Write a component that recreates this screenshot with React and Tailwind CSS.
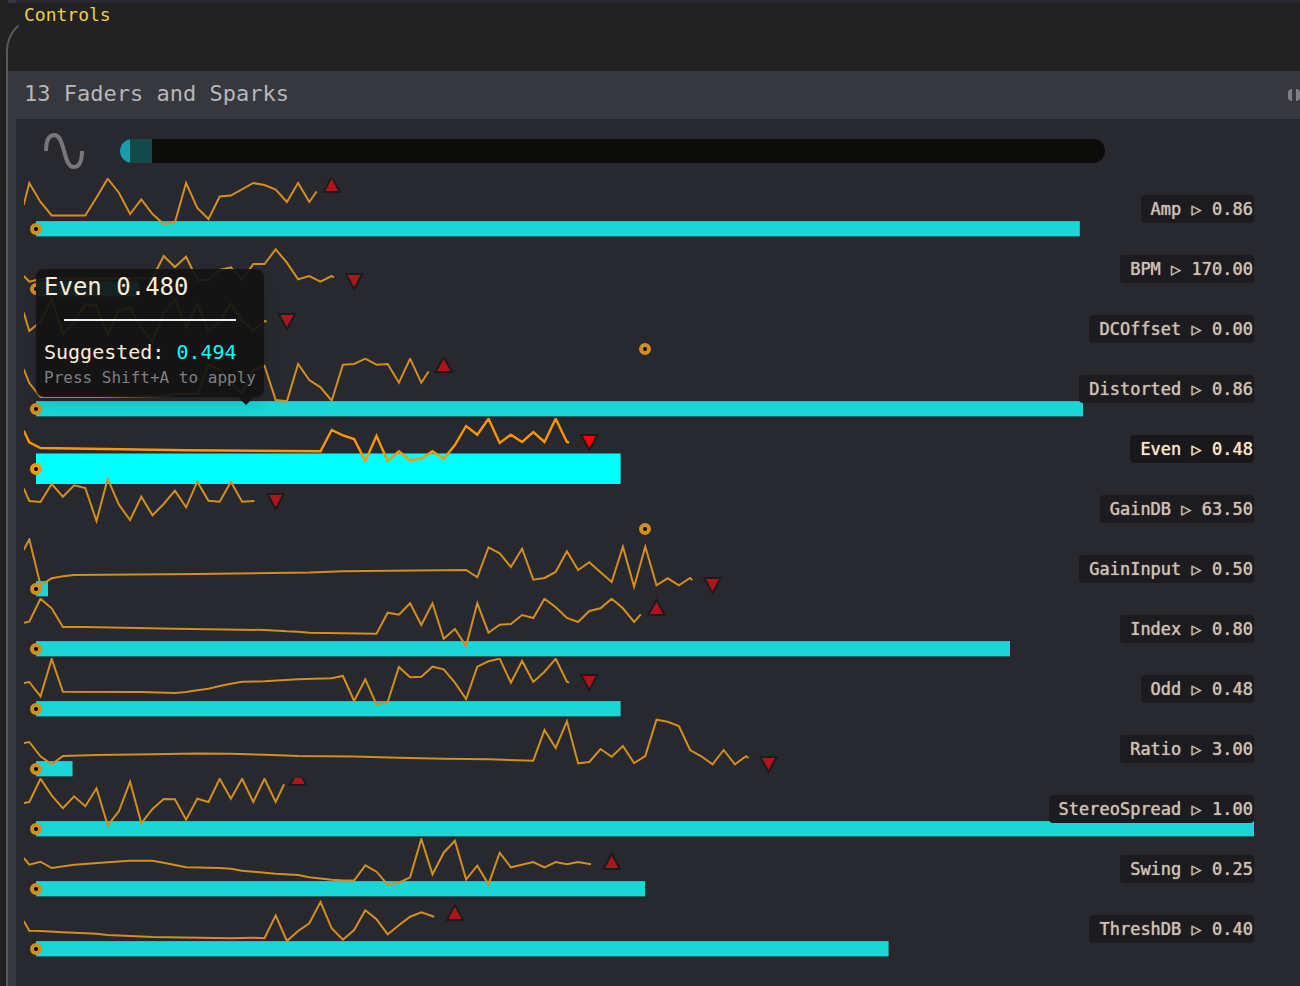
const STEP = 11.2;
const OFFSET = 5.3;

// spark: [step, y] pairs, marker: [step, top, direction], fill and dot in percent
const faders = [
  {
    name: 'Amp', value: '0.86', fill: 85.7, dot: 0, marker: [27, 1, 'up'],
    spark: [[-0.5, 27], [0, 5], [1, 24], [2, 37.5], [5, 37.5], [6, 19.5], [7, 0.7], [8, 14.7], [9, 36], [10, 21.5], [11, 36], [12, 46], [13, 44.5], [14, 5], [15, 30], [16, 41], [17, 18.5], [18, 17.5], [20, 5], [21, 7], [22, 11.7], [23, 24], [24, 5], [25, 24], [25.65, 13.5]],
  },
  {
    name: 'BPM', value: '170.00', fill: 8.5, dot: 0, marker: [29, 37, 'down'],
    spark: [[-0.5, 38], [0, 43.7], [1, 41], [11, 40], [12, 18], [13, 29], [14, 18.7], [15, 42], [16, 42], [17, 32], [18, 29.3], [19, 42], [20, 26], [21, 26], [22, 11.3], [23, 24.7], [24, 41.3], [25, 38], [26, 43.7], [27, 38], [27.2, 39.5]],
  },
  {
    name: 'DCOffset', value: '0.00', fill: 0, dot: 50, marker: [23, 17, 'down'],
    spark: [[-0.5, 14.5], [0, 33], [1, 23.7], [2, 1], [3, 36], [4, 24], [5, 6], [6, 8], [7, 37], [8, 12], [9, 9.5], [10, 30], [11, 43.7], [12, 15.5], [13, 1.5], [14, 29.5], [15, 5.5], [16, 32.7], [17, 23.7], [18, 5.5], [19, 23], [20, 32.7], [21, 23.3], [21.2, 23.3]],
  },
  {
    name: 'Distorted', value: '0.86', fill: 86, dot: 0, marker: [37, 1, 'up'],
    spark: [[-0.5, 11], [0, 25], [1, 39], [6, 39], [12, 38], [13, 36], [15, 36], [16, 7], [17, 11.5], [18, 26], [19, 35.5], [20, 12], [21, 7.7], [22, 42], [23, 43.3], [24, 6], [25, 22], [26, 29.3], [27, 42.7], [28, 6.7], [29, 6], [30, 0.7], [31, 6.7], [32, 6], [33, 24.7], [34, 0.7], [35, 24.7], [35.65, 13.5]],
  },
  {
    name: 'Even', value: '0.48', fill: 48, dot: 0, marker: [50, 18, 'down'], active: true,
    spark: [[-0.5, 12.7], [0, 24.3], [1, 30], [14, 32.3], [26, 33.3], [27, 12], [28, 17.3], [29, 21], [30, 43], [31, 18], [32, 43], [33, 33.3], [34, 42.3], [35, 40.7], [36, 33.3], [37, 40.7], [38, 27], [39, 8], [40, 16.7], [41, 0.7], [42, 25], [43, 16.7], [44, 24], [45, 14], [46, 24], [47, 0.7], [48, 24], [48.2, 24.5]],
  },
  {
    name: 'GainDB', value: '63.50', fill: 0, dot: 50, marker: [22, 17, 'down'],
    spark: [[-0.5, 10.3], [0, 23], [1, 24], [2, 6], [3, 18.7], [4, 7.3], [5, 10], [6, 43], [7, 0.7], [8, 26.7], [9, 42], [10, 18.7], [11, 37.3], [12, 26], [13, 12.7], [14, 29.3], [15, 3.7], [16, 22.7], [17, 23.7], [18, 3.7], [19, 23.7], [20.1, 23]],
  },
  {
    name: 'GainInput', value: '0.50', fill: 1, dot: 0, marker: [61, 41, 'down'],
    spark: [[-0.5, 12], [0, 1.3], [1, 47], [2, 40.3], [3, 38.3], [4, 37], [15, 36], [25, 34.5], [28, 33.3], [39, 32], [40, 39.3], [41, 9.3], [42, 15.3], [43, 29], [44, 10.7], [45, 41.7], [46, 40], [47, 34], [48, 13.3], [49, 32], [50, 24.3], [51, 34.3], [52, 44], [53, 8.7], [54, 48.7], [55, 8.7], [56, 47.3], [57, 40.3], [58, 47.3], [59, 40], [59.2, 42]],
  },
  {
    name: 'Index', value: '0.80', fill: 80, dot: 0, marker: [56, 4, 'up'],
    spark: [[-0.5, 24.7], [0, 23.7], [1, 0.7], [2, 10.3], [3, 29], [5, 29], [13, 30.7], [21, 32], [23, 33.3], [24, 33.7], [25, 34.7], [31, 35.7], [32, 14.7], [33, 16.7], [34, 5.3], [35, 27], [36, 5.3], [37, 40.7], [38, 31], [39, 48], [40, 5.3], [41, 34.7], [42, 26.7], [43, 26], [44, 17], [45, 20], [46, 0.7], [47, 9.3], [48, 20], [49, 24], [50, 13], [51, 10.3], [52, 0.7], [53, 10.3], [54, 24], [54.6, 16.3]],
  },
  {
    name: 'Odd', value: '0.48', fill: 48, dot: 0, marker: [50, 18, 'down'],
    spark: [[-0.5, 25], [0, 24], [1, 38.3], [2, 1], [3, 33.7], [10, 34], [13, 35], [14, 34], [15, 32.3], [16, 30.7], [17, 28], [18, 25.7], [19, 23.7], [21, 23.3], [24, 21.3], [27, 20.3], [28, 18], [29, 43], [30, 21.3], [31, 46.7], [32, 44], [33, 9], [34, 19.3], [35, 18.7], [36, 8.7], [37, 11.3], [38, 24.7], [39, 41], [40, 8.7], [41, 3.3], [42, 0.7], [43, 24.7], [44, 3], [45, 24], [46, 13.7], [47, 0.7], [48, 23.7], [48.2, 24.7]],
  },
  {
    name: 'Ratio', value: '3.00', fill: 3, dot: 0, marker: [66, 40, 'down'],
    spark: [[-0.5, 25], [0, 24], [1, 38.3], [2, 46.3], [3, 38], [6, 37], [11, 36.3], [15, 35.5], [18, 35.7], [21, 36.7], [24, 38], [29, 38.5], [33, 39.7], [37, 40.7], [41, 41.3], [45, 42.7], [46, 12], [47, 30], [48, 3.3], [49, 45.3], [50, 44], [51, 31], [52, 38.7], [53, 28], [54, 45], [55, 38], [56, 1.7], [57, 3.7], [58, 8], [59, 32], [60, 38.3], [61, 46.3], [62, 32], [63, 46.3], [64, 38.3], [64.2, 40]],
  },
  {
    name: 'StereoSpread', value: '1.00', fill: 100, dot: 0, marker: [24, -6, 'up'],
    spark: [[-0.5, 25], [0, 24], [1, 0.7], [2, 17.3], [3, 30.3], [4, 18.3], [5, 28.3], [6, 10.3], [7, 47.3], [8, 33.3], [9, 3.7], [10, 45.3], [11, 31], [12, 21], [13, 21.3], [14, 41.7], [15, 20.7], [16, 24], [17, 0.7], [18, 20.7], [19, 0.7], [20, 24], [21, 0.7], [22, 24], [22.75, 6.3]],
  },
  {
    name: 'Swing', value: '0.25', fill: 50, dot: 0, marker: [52, 18, 'up'],
    spark: [[-0.5, 20], [0, 26.7], [1, 23.7], [2, 30], [4, 26.7], [7, 24.3], [9, 22.7], [11, 22.7], [12, 24.7], [14, 29.3], [17, 30], [18, 30.7], [19, 32.7], [22, 35.7], [24, 37], [25, 39.3], [27, 41.7], [28, 42.5], [29, 42.5], [30, 27.3], [31, 33.7], [32, 46.7], [33, 44.7], [34, 39.3], [35, 1], [36, 36.3], [37, 14.7], [38, 2.7], [39, 41.3], [40, 27.7], [41, 46.3], [42, 14.7], [43, 29.3], [45, 24], [46, 29.3], [47, 24], [48, 26.3], [49, 24], [50.15, 26.3]],
  },
  {
    name: 'ThreshDB', value: '0.40', fill: 70, dot: 0, marker: [38, 9, 'up'],
    spark: [[-0.5, 23], [0, 32.7], [1, 33], [3, 34.3], [6, 35.7], [7, 37], [11, 39], [18, 40.3], [20, 39.7], [21, 40.3], [22, 17.3], [23, 43], [24, 33], [25, 25.3], [26, 4], [27, 30.3], [28, 41.7], [29, 32], [30, 12.3], [31, 21.3], [32, 36.3], [33, 27.3], [34, 18.7], [35, 14.3], [36.15, 18.7]],
  },
];

function Spark({ points, marker, active }) {
  const [step, top, direction] = marker;
  const x = OFFSET + step * STEP;
  const bottom = top + 12;
  const triangle =
    direction === 'up'
      ? `${x},${top} ${x + 6.5},${bottom} ${x - 6.5},${bottom}`
      : `${x},${bottom} ${x + 6.5},${top} ${x - 6.5},${top}`;

  return (
    <svg className="[grid-area:1/1] w-full h-[60px] pointer-events-none" aria-hidden="true">
      <polyline
        points={points.map(([i, y]) => `${OFFSET + i * STEP},${y}`).join(' ')}
        fill="none"
        stroke={active ? '#ff9500' : '#d38e1f'}
        strokeWidth={active ? 2.4 : 2}
      />
      <polygon
        points={triangle}
        fill={active ? '#ff0000' : '#b01419'}
        stroke="#1b1b1e"
        strokeWidth="4"
        paintOrder="stroke"
      />
    </svg>
  );
}

function Tooltip() {
  return (
    <div
      role="tooltip"
      className="absolute z-10 left-3 bottom-full mb-[21px] w-max px-2 pb-[10px] rounded-lg bg-[#121212]/92 shadow-lg"
    >
      <p className="text-2xl leading-9 text-[#fbebd7]">Even 0.480</p>
      <hr className="mx-5 my-[14px] border-t-2 border-[#eeeeee]" />
      <p className="text-xl leading-[34px] text-[#fbebd7]">
        Suggested: <span className="text-[#00ffff]">0.494</span>
      </p>
      <p className="text-base leading-[18px] text-[#7f7f7f]">Press Shift+A to apply</p>
      <svg className="absolute top-full right-[10px] w-4 h-2" viewBox="0 0 16 8" aria-hidden="true">
        <polygon points="0,0 16,0 8,8" fill="#161616" />
      </svg>
    </div>
  );
}

function Fader({ name, value, fill, dot, marker, spark, active }) {
  return (
    <div className="relative grid grid-cols-1 h-[60px]">
      <input
        id={name}
        type="range"
        min="0"
        max="100"
        step="0.1"
        defaultValue={fill}
        className={`[grid-area:1/1] appearance-none ml-3 bg-no-repeat outline-none [&::-webkit-slider-thumb]:appearance-none [&::-webkit-slider-thumb]:opacity-0 ${
          active
            ? 'mt-[35px] h-[31px] bg-[linear-gradient(#159a9c_1px,#00ffff_1px)]'
            : 'mt-[43px] h-4 bg-[linear-gradient(#22bfc0_1px,#1ad6d6_1px,#1ad6d6_15px,#256769_15px)]'
        }`}
        style={{ backgroundSize: `${fill}% 100%` }}
      />
      <Spark points={spark} marker={marker} active={active} />
      <div className="[grid-area:1/1] relative ml-3 mt-[45px] h-3 pointer-events-none">
        <span
          className={`absolute -translate-x-1/2 size-3 rounded-full border-4 bg-black ${
            active ? 'border-[#ff9800]' : 'border-[#d38e1f]'
          }`}
          style={{ left: `${dot}%` }}
        ></span>
      </div>
      <label
        htmlFor={name}
        className={`[grid-area:1/1] relative justify-self-end mt-[17px] h-7 pl-[10px] pr-px rounded text-[17px] leading-7 whitespace-nowrap [text-shadow:0_0_1px_currentColor] ${
          active ? 'bg-[#18181a] text-[#ffe4c4]' : 'bg-[#1c1c20] text-[#cdc0b1]'
        }`}
      >
        {name} ▷ {value}
      </label>
      {active && <Tooltip />}
    </div>
  );
}

export default function App() {
  return (
    <div className="min-h-screen flex flex-col overflow-hidden bg-[#222222] font-['DejaVu_Sans_Mono',monospace]">
      <div className="h-[3px] ml-2 border-l-8 border-[#37383d] bg-[#28292e]"></div>

      <div className="flex h-[68px]">
        <svg className="w-6 h-[68px]" viewBox="0 0 24 68" fill="none" aria-hidden="true">
          <path d="M18.5 22.5C11 29 7 37 7 48V68" stroke="#5a5a5a" strokeWidth="2" />
        </svg>
        <h1 className="text-lg leading-6 text-[#f0cf45]">Controls</h1>
      </div>

      <section className="flex-1 flex flex-col ml-[6px] border-l-2 border-[#5a5a5a] bg-[#37383d]">
        <header className="flex items-center justify-between h-12 pl-4">
          <h2 className="pb-[3px] text-[22px] leading-8 text-[#b6b6bb]">13 Faders and Sparks</h2>
          <button type="button" aria-label="Resize panel" className="flex gap-1">
            <span className="w-1 h-3 rounded-l-full bg-[#7e7e83]"></span>
            <span className="w-1 h-3 rounded-r-full bg-[#7e7e83]"></span>
          </button>
        </header>

        <div className="flex-1 ml-2 pl-2 pr-[46px] pb-6 bg-[#28292e]">
          <div className="flex items-center gap-9 pt-[14px] pb-[9px] pl-5 pr-[149px]">
            <svg className="w-10 h-9 shrink-0" viewBox="0 0 40 36" fill="none" aria-hidden="true">
              <path
                d="M2 18C2 8 5 2 10.5 2C15 2 17.5 8 20 18C22.5 28 25 34 29.500 34C35 34 38 28 38 18"
                stroke="#77777a"
                strokeWidth="4"
              />
            </svg>
            <div className="flex flex-1 h-6 rounded-full overflow-hidden bg-[#0b0b09]">
              <div className="w-[10px] bg-[#199bab]"></div>
              <div className="w-[22px] bg-[#134848]"></div>
            </div>
          </div>

          {faders.map((fader) => (
            <Fader key={fader.name} {...fader} />
          ))}
        </div>
      </section>
    </div>
  );
}
